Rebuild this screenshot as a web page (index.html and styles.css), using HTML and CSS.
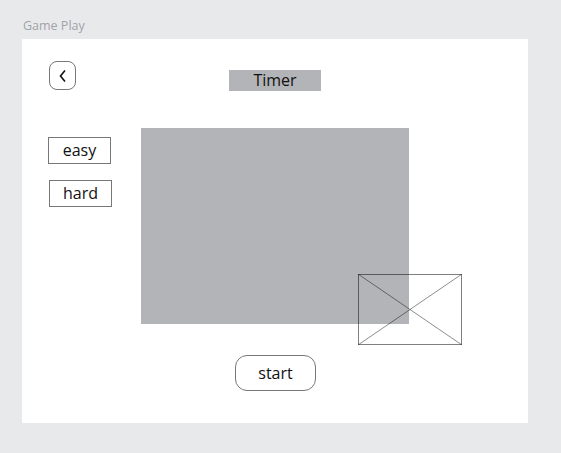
FILE: index.html
```html
<!DOCTYPE html>
<html>
<head>
<meta charset="utf-8">
<link rel="stylesheet" href="styles.css">
</head>
<body>
<div class="page">
  <div class="title">Game Play</div>
  <div class="panel">
    <div class="header">
      <div class="back">
        <svg width="12" height="16" viewBox="0 0 12 16"><path d="M8 2.5 L3.5 8 L8 13.5" fill="none" stroke="#111" stroke-width="1.6"/></svg>
      </div>
      <div class="timer">Timer</div>
    </div>
    <div class="main">
      <div class="side">
        <div class="mode easy">easy</div>
        <div class="mode hard">hard</div>
      </div>
      <div class="canvas">
        <div class="placeholder">
          <svg width="104" height="71" viewBox="0 0 104 71" preserveAspectRatio="none">
            <rect x="0.5" y="0.5" width="103" height="70" fill="none" stroke="rgba(0,0,0,0.5)" stroke-width="1"/>
            <line x1="0" y1="0" x2="104" y2="71" stroke="rgba(0,0,0,0.45)" stroke-width="1"/>
            <line x1="104" y1="0" x2="0" y2="71" stroke="rgba(0,0,0,0.45)" stroke-width="1"/>
          </svg>
        </div>
      </div>
    </div>
    <div class="start">start</div>
  </div>
</div>
</body>
</html>
```
FILE: styles.css
```css
html, body {
  margin: 0;
  padding: 0;
  background: #e8e9eb;
  font-family: "Open Sans", "Noto Sans", sans-serif;
}
.page {
  width: 561px;
  height: 453px;
  padding-top: 18px;
  box-sizing: border-box;
}
.title {
  margin-left: 23px;
  font-size: 12.5px;
  line-height: 16px;
  height: 21px;
  color: #a0a4a8;
}
.panel {
  margin-left: 22px;
  width: 506px;
  height: 384px;
  background: #fff;
  padding-top: 22px;
  box-sizing: border-box;
}
.header {
  display: flex;
  align-items: flex-start;
  padding-left: 27px;
  height: 29px;
}
.back {
  width: 27px;
  height: 29px;
  box-sizing: border-box;
  border: 1px solid #777;
  border-radius: 8px;
  display: flex;
  align-items: center;
  justify-content: center;
}
.back svg { display: block; }
.timer {
  margin-left: 153px;
  margin-top: 9px;
  width: 92px;
  height: 21px;
  background: #b3b4b7;
  font-size: 16px;
  line-height: 21px;
  text-align: center;
  color: #111;
}
.main {
  display: flex;
  margin-top: 38px;
}
.side {
  width: 119px;
  padding-top: 9px;
  box-sizing: border-box;
  display: flex;
  flex-direction: column;
  gap: 16px;
}
.mode {
  width: 63px;
  height: 27px;
  box-sizing: border-box;
  border: 1px solid #777;
  font-size: 16px;
  line-height: 25px;
  text-align: center;
  color: #111;
}
.easy { margin-left: 26px; }
.hard { margin-left: 27px; }
.canvas {
  position: relative;
  width: 268px;
  height: 196px;
  background: #b3b4b7;
}
.placeholder {
  position: absolute;
  left: 217px;
  top: 146px;
  width: 104px;
  height: 71px;
}
.placeholder svg { display: block; }
.start {
  margin-top: 31px;
  margin-left: 213px;
  width: 81px;
  height: 36px;
  box-sizing: border-box;
  border: 1px solid #777;
  border-radius: 12px;
  font-size: 16px;
  line-height: 34px;
  text-align: center;
  color: #111;
}
```
